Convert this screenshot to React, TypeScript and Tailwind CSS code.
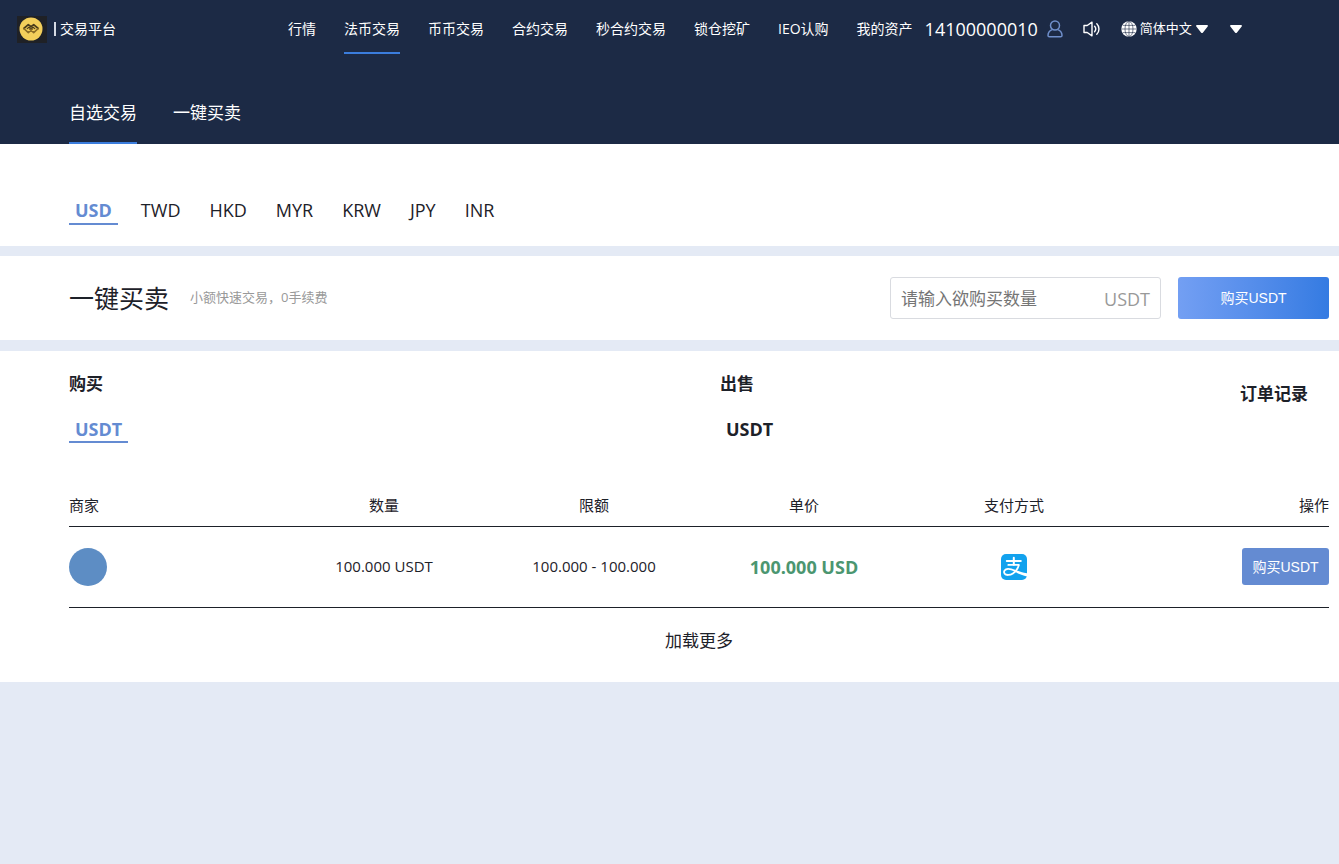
import { useState } from "react";

const NAV_ITEMS = ["行情", "法币交易", "币币交易", "合约交易", "秒合约交易", "锁仓挖矿", "IEO认购", "我的资产"];
const TRADE_TABS = ["自选交易", "一键买卖"];
const CURRENCIES = ["USD", "TWD", "HKD", "MYR", "KRW", "JPY", "INR"];

const OFFERS = [
    { id: 1, amount: "100.000 USDT", limit: "100.000 - 100.000", price: "100.000 USD" },
];

function Logo() {
    return (
        <svg width="30" height="27" viewBox="0 0 30 27" aria-hidden="true">
            <rect width="30" height="27" fill="#1f2126" />
            <circle cx="14" cy="13" r="11.5" fill="#f3cf5b" />
            <g fill="none" strokeLinejoin="round" strokeLinecap="round">
                <path d="M6.8 12.5 11.3 8.6 14 10.6 16.7 8.6 21.2 12.5" stroke="#4a3c1c" strokeWidth="1.7" />
                <path d="M6.8 12.5 11.3 16.6 15.5 12.8M21.2 12.5 16.7 16.6 12.5 12.8" stroke="#8a6c26" strokeWidth="1.6" />
                <path d="M10.2 12.6 12.2 11 14 12.6 15.8 11 17.8 12.6" stroke="#4a3c1c" strokeWidth="1.2" />
            </g>
        </svg>
    );
}

function UserIcon() {
    return (
        <svg width="16" height="18" viewBox="0 0 16 18" fill="none" stroke="#6f8fcb" strokeWidth="1.5" aria-hidden="true">
            <circle cx="8" cy="5.5" r="4.5" />
            <path d="M5.3 9.6C2.6 10.6 1 12.8 1 15.4c0 .9.5 1.4 1.4 1.4h11.2c.9 0 1.4-.5 1.4-1.4 0-2.6-1.6-4.8-4.3-5.8" />
        </svg>
    );
}

function SoundIcon() {
    return (
        <svg width="18" height="16" viewBox="0 0 18 16" fill="none" stroke="#fff" strokeWidth="1.4" strokeLinejoin="round" strokeLinecap="round" aria-hidden="true">
            <path d="M1 4.5h3.2L9 1.2v13.6l-4.8-3.3H1z" />
            <path d="M11.6 5.3c1.3 1.5 1.3 3.9 0 5.4M13.8 2.8c2.9 2.8 2.9 7.6 0 10.4" />
        </svg>
    );
}

function GlobeIcon() {
    return (
        <svg width="16" height="16" viewBox="0 0 16 16" aria-hidden="true">
            <circle cx="8" cy="8" r="7.7" fill="#fff" />
            <g fill="none" stroke="#1d2a45" strokeWidth=".6">
                <path d="M8 .5v15M.5 8h15M1.8 4.4h12.4M1.8 11.6h12.4" />
                <ellipse cx="8" cy="8" rx="4" ry="7.5" />
            </g>
        </svg>
    );
}

function Caret() {
    return (
        <svg width="12" height="8" viewBox="0 0 12 8" fill="#fff" aria-hidden="true">
            <path d="M1 0h10c.9 0 1.2.8.7 1.4L7 7.4c-.6.7-1.4.7-2 0L.3 1.4C-.2.8.1 0 1 0z" />
        </svg>
    );
}

function AlipayIcon() {
    return (
        <svg width="26" height="26" viewBox="0 0 26 26" className="mx-auto" role="img" aria-label="支付宝">
            <rect width="26" height="26" rx="5" fill="#12a2ee" />
            <g fill="none" stroke="#fff" strokeLinecap="round" strokeLinejoin="round">
                <path d="M5.8 6.9h14M12.8 3.8v7" strokeWidth="2" />
                <path d="M7.3 10.9h10.6c-1 3.6-3.2 6.8-6 8.6-2.8 1.9-6.9 2-8.3.1-1.4-2 .3-4.6 3.4-4.8 2.2-.1 4.6.8 7.2 2" strokeWidth="1.8" />
            </g>
            <path d="M13.4 15.7c3.6 1.3 7.8 2.8 12.6 3.6v3.2c-4.6-1-9.4-3.2-13.4-5.3z" fill="#fff" />
        </svg>
    );
}

export default function App() {
    const [tab, setTab] = useState("自选交易");
    const [currency, setCurrency] = useState("USD");
    const [side, setSide] = useState("buy");
    const [amount, setAmount] = useState("");

    return (
        <div className="min-h-screen bg-[#e4eaf5] text-[#1d2129] font-['Open_Sans','Noto_Sans_CJK_SC',sans-serif]">
            <header className="bg-[#1c2a45] text-white">
                <div className="flex h-[58px] items-center whitespace-nowrap pl-[17px]">
                    <a href="#home" className="flex w-[271px] shrink-0 items-center text-sm">
                        <Logo />
                        <span className="ml-[7px] mr-1 h-[14px] w-[2px] bg-[#d5dae3]" />
                        交易平台
                    </a>
                    <nav className="flex gap-7 text-sm">
                        {NAV_ITEMS.map((item) => (
                            <a
                                key={item}
                                href="#nav"
                                className={item === "法币交易"
                                    ? "mt-[2px] flex h-12 items-center border-b-2 border-[#3b7ddd]"
                                    : "mt-[2px] flex h-12 items-center border-b-2 border-transparent"}
                            >
                                {item}
                            </a>
                        ))}
                    </nav>
                    <span className="ml-3 text-lg">14100000010</span>
                    <button aria-label="账户" className="ml-[9px]"><UserIcon /></button>
                    <button aria-label="声音" className="ml-5"><SoundIcon /></button>
                    <button aria-haspopup="menu" className="ml-5 flex items-center text-[13px]">
                        <GlobeIcon />
                        <span className="ml-[3px] mr-1">简体中文</span>
                        <Caret />
                    </button>
                    <button aria-label="更多" aria-haspopup="menu" className="ml-[22px]"><Caret /></button>
                </div>
                <div className="flex h-[86px] items-end gap-9 pl-[69px] text-[17px]">
                    {TRADE_TABS.map((item) => (
                        <button
                            key={item}
                            onClick={() => setTab(item)}
                            className={tab === item
                                ? "h-[60px] border-b-2 border-[#3b7ddd]"
                                : "h-[60px] border-b-2 border-transparent"}
                        >
                            {item}
                        </button>
                    ))}
                </div>
            </header>

            <section className="flex h-[102px] items-start gap-[17px] bg-white pl-[69px] pt-[54px] text-lg leading-6">
                {CURRENCIES.map((item) => (
                    <button
                        key={item}
                        onClick={() => setCurrency(item)}
                        className={currency === item
                            ? "border-b-2 border-[#648bd2] px-[6px] pb-px font-bold text-[#648bd2]"
                            : "border-b-2 border-transparent px-[6px] pb-px"}
                    >
                        {item}
                    </button>
                ))}
            </section>

            <section className="mt-[10px] flex h-[84px] items-center bg-white pl-[69px] pr-[10px]">
                <h2 className="pt-[2px] text-[25px]">一键买卖</h2>
                <p className="ml-[21px] text-[13px] text-[#999]">小额快速交易，0手续费</p>
                <div className="ml-auto flex h-[42px] w-[271px] items-center rounded-[3px] border border-[#d9dbe0] px-[10px] pt-[2px]">
                    <input
                        type="text"
                        aria-label="购买数量"
                        placeholder="请输入欲购买数量"
                        value={amount}
                        onChange={(e) => setAmount(e.target.value)}
                        className="min-w-0 flex-1 text-[17px] outline-none placeholder:text-[#757575]"
                    />
                    <span className="text-lg text-[#999]">USDT</span>
                </div>
                <button className="ml-[17px] h-[42px] w-[151px] rounded-[3px] bg-linear-to-r from-[#739ff3] to-[#347be2] text-sm text-white font-['Liberation_Sans','Noto_Sans_CJK_SC',sans-serif]">
                    购买USDT
                </button>
            </section>

            <section className="mt-[11px] bg-white pb-7 pl-[69px] pr-[10px]">
                <div className="grid grid-cols-[651fr_520fr_89px] items-start pt-5 text-[17px] font-bold">
                    <div>
                        <h3 className="leading-[26px]">购买</h3>
                        <button
                            onClick={() => setSide("buy")}
                            className={side === "buy"
                                ? "mt-5 border-b-2 border-[#648bd2] px-[6px] text-lg leading-6 text-[#648bd2]"
                                : "mt-5 border-b-2 border-transparent px-[6px] text-lg leading-6"}
                        >
                            USDT
                        </button>
                    </div>
                    <div>
                        <h3 className="leading-[26px]">出售</h3>
                        <button
                            onClick={() => setSide("sell")}
                            className={side === "sell"
                                ? "mt-5 border-b-2 border-[#648bd2] px-[6px] text-lg leading-6 text-[#648bd2]"
                                : "mt-5 border-b-2 border-transparent px-[6px] text-lg leading-6"}
                        >
                            USDT
                        </button>
                    </div>
                    <a href="#orders" className="mt-[10px] leading-[26px]">订单记录</a>
                </div>

                <table className="mt-[41px] w-full table-fixed text-center text-[15px]">
                    <thead>
                        <tr className="h-[42px] border-b border-[#1d2129]">
                            <th className="text-left font-normal">商家</th>
                            <th className="font-normal">数量</th>
                            <th className="font-normal">限额</th>
                            <th className="font-normal">单价</th>
                            <th className="font-normal">支付方式</th>
                            <th className="text-right font-normal">操作</th>
                        </tr>
                    </thead>
                    <tbody>
                        {OFFERS.map((offer) => (
                            <tr key={offer.id} className="h-[81px] border-b border-[#1d2129]">
                                <td><div className="size-[38px] rounded-full bg-[#5d8dc4]" /></td>
                                <td>{offer.amount}</td>
                                <td>{offer.limit}</td>
                                <td className="text-lg font-bold text-[#4b9670]">{offer.price}</td>
                                <td><AlipayIcon /></td>
                                <td className="text-right">
                                    <button className="h-[37px] w-[87px] rounded-[3px] bg-[#648bd2] text-sm text-white font-['Liberation_Sans','Noto_Sans_CJK_SC',sans-serif]">
                                        购买USDT
                                    </button>
                                </td>
                            </tr>
                        ))}
                    </tbody>
                </table>
                <button className="mx-auto mt-5 block text-[17px] leading-[26px]">加载更多</button>
            </section>
        </div>
    );
}
